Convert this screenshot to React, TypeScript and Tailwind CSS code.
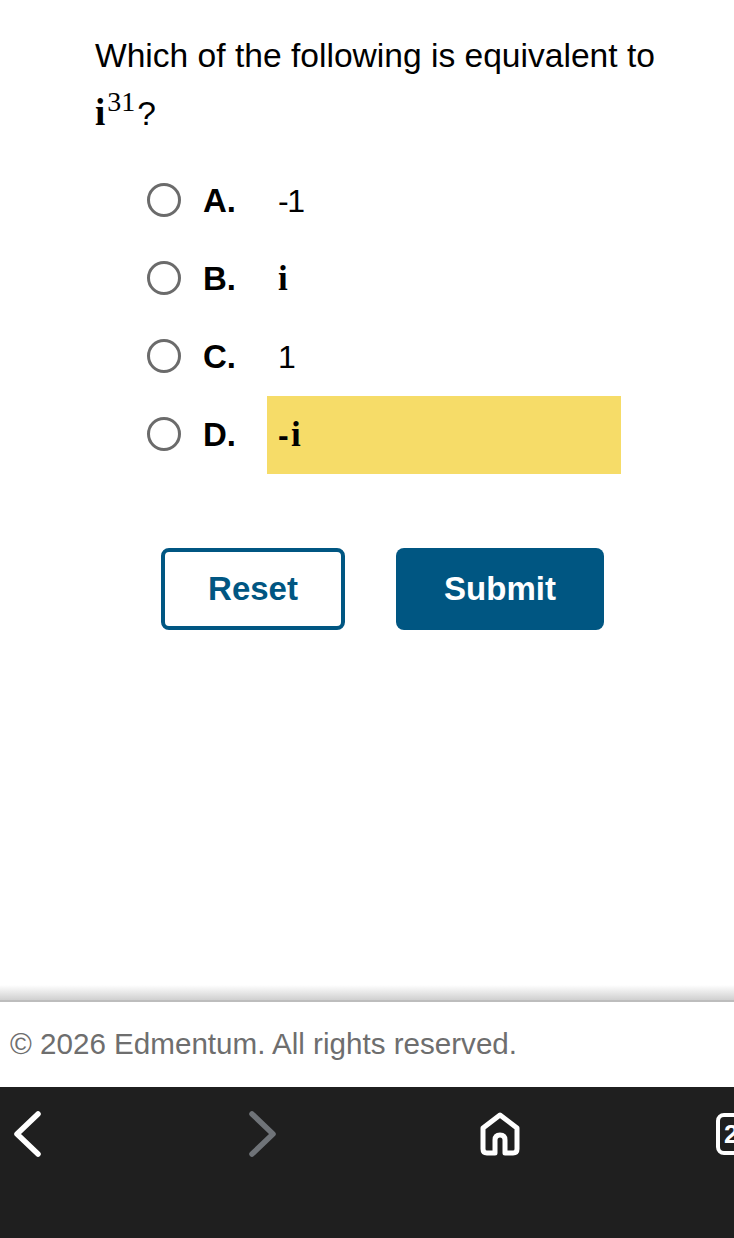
const options = [
  { letter: "A.", value: "-1" },
  { letter: "B.", math: "i" },
  { letter: "C.", value: "1" },
  { letter: "D.", value: "-", math: "i", highlight: true },
];

interface OptionRowProps {
  letter: string;
  value?: string;
  math?: string;
  highlight?: boolean;
}

function OptionRow({ letter, value, math, highlight }: OptionRowProps) {
  return (
    <div className="flex h-[78px] items-center">
      <div className="mb-[2px] h-[34px] w-[34px] shrink-0 rounded-full border-[3px] border-[#6b6b6b] bg-white" />
      <span className="ml-[22px] w-[64px] text-[33px] font-bold text-black">{letter}</span>
      <div className={`flex h-[78px] w-[354px] items-center pl-[11px] text-[32px] tracking-[-1.5px] text-black ${highlight ? "bg-[#f6dc68]" : ""}`}>
        {value && <span className={math ? "w-[13px] font-bold" : ""}>{value}</span>}
        {math && <span className="font-['Liberation_Serif',serif] text-[35px] font-bold">{math}</span>}
      </div>
    </div>
  );
}

export default function App() {
  return (
    <div className="flex h-[1238px] w-[734px] flex-col overflow-hidden bg-white font-['Liberation_Sans',Arial,sans-serif]">
      {/* Question */}
      <main className="flex-1 pl-[95px] pt-[27px]">
        <p className="text-[33.6px] leading-[57px] text-black">
          Which of the following is equivalent to
          <br />
          <span className="font-['Liberation_Serif',serif] text-[37px] font-bold">i</span>
          <sup className="ml-[2px] font-['Liberation_Serif',serif] text-[28px] leading-none">31</sup>
          <span className="ml-[2px]">?</span>
        </p>

        <div className="ml-[52px] mt-[20px]">
          {options.map((o) => (
            <OptionRow key={o.letter} {...o} />
          ))}
        </div>

        {/* Buttons */}
        <div className="ml-[66px] mt-[74px] flex gap-[51px]">
          <button className="h-[82px] w-[184px] rounded-[8px] border-[4px] border-[#005682] bg-white text-[33px] font-bold text-[#005682]">
            Reset
          </button>
          <button className="h-[82px] w-[208px] rounded-[8px] bg-[#005682] text-[33px] font-bold text-white">
            Submit
          </button>
        </div>
      </main>

      {/* Footer */}
      <div className="h-[15px] bg-gradient-to-b from-white to-[#d0d0d0]" />
      <footer className="flex h-[87px] items-center border-t-[2px] border-[#bdbdbd] pl-[10px] text-[29.6px] text-[#6e6e6e]">
        © 2026 Edmentum. All rights reserved.
      </footer>

      {/* Browser toolbar */}
      <nav className="flex h-[151px] items-start overflow-hidden bg-[#1f1f1f] pt-[24px]">
        <svg className="ml-[12px] shrink-0" width="30" height="46" viewBox="0 0 30 46" fill="none" stroke="#ffffff" strokeWidth="5.5" strokeLinecap="round" strokeLinejoin="round">
          <path d="M26 3 5 23l21 20" />
        </svg>
        <svg className="ml-[206px] shrink-0" width="30" height="46" viewBox="0 0 30 46" fill="none" stroke="#6f7378" strokeWidth="5.5" strokeLinecap="round" strokeLinejoin="round">
          <path d="M4 3l21 20L4 43" />
        </svg>
        <svg className="ml-[202px] mt-[1px] shrink-0" width="40" height="44" viewBox="0 0 40 44" fill="none" stroke="#ffffff" strokeWidth="5" strokeLinejoin="round">
          <path d="M20 3 3 16v21q0 4 4 4h8V28q0-5 5-5t5 5v13h8q4 0 4-4V16z" />
        </svg>
        <div className="ml-[196px] mt-[2px] flex h-[42px] w-[40px] shrink-0 items-center rounded-[8px] border-[4px] border-white pl-[4px] text-[26px] font-bold leading-none text-white">
          2
        </div>
      </nav>
    </div>
  );
}
